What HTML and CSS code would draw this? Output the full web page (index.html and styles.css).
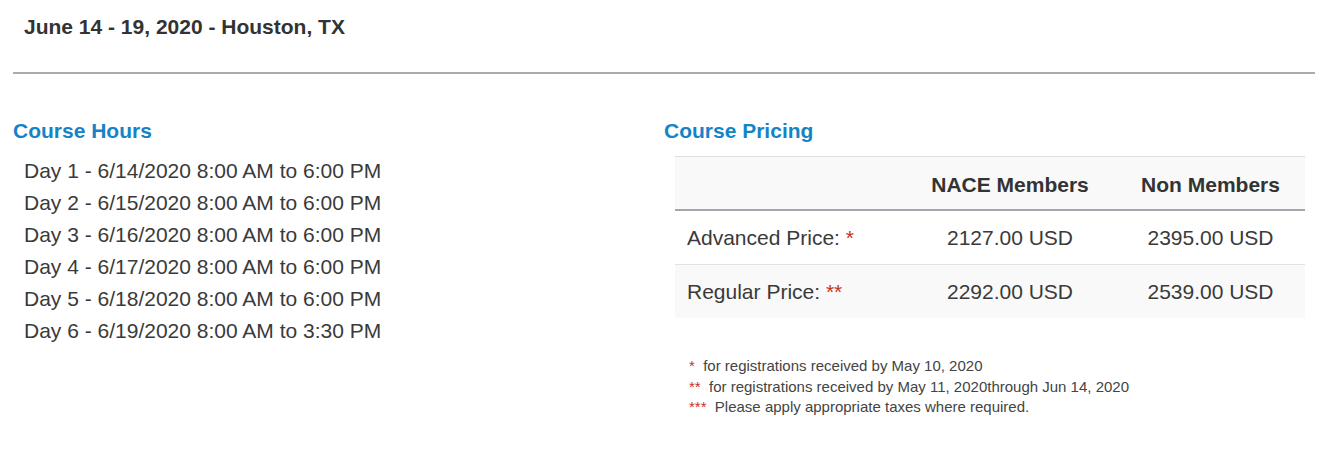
FILE: index.html
```html
<!DOCTYPE html>
<html lang="en">
<head>
<meta charset="utf-8">
<title>Course Details</title>
<link rel="stylesheet" href="styles.css">
</head>
<body>
<div class="page">
  <h1 class="title">June 14 - 19, 2020 - Houston, TX</h1>
  <div class="rule"></div>
  <div class="columns">
    <section class="col">
      <h2 class="section-title">Course Hours</h2>
      <ul class="hours">
        <li>Day 1 - 6/14/2020 8:00 AM to 6:00 PM</li>
        <li>Day 2 - 6/15/2020 8:00 AM to 6:00 PM</li>
        <li>Day 3 - 6/16/2020 8:00 AM to 6:00 PM</li>
        <li>Day 4 - 6/17/2020 8:00 AM to 6:00 PM</li>
        <li>Day 5 - 6/18/2020 8:00 AM to 6:00 PM</li>
        <li>Day 6 - 6/19/2020 8:00 AM to 3:30 PM</li>
      </ul>
    </section>
    <section class="col">
      <h2 class="section-title">Course Pricing</h2>
      <table class="pricing">
        <colgroup>
          <col class="c-label">
          <col class="c-nace">
          <col class="c-non">
        </colgroup>
        <thead>
          <tr>
            <th></th>
            <th>NACE Members</th>
            <th>Non Members</th>
          </tr>
        </thead>
        <tbody>
          <tr>
            <td class="label">Advanced Price: <span class="star">*</span></td>
            <td>2127.00 USD</td>
            <td>2395.00 USD</td>
          </tr>
          <tr class="alt">
            <td class="label">Regular Price: <span class="star">**</span></td>
            <td>2292.00 USD</td>
            <td>2539.00 USD</td>
          </tr>
        </tbody>
      </table>
      <div class="notes">
        <p><span class="star">*</span>&nbsp; for registrations received by May 10, 2020</p>
        <p><span class="star">**</span>&nbsp; for registrations received by May 11, 2020through Jun 14, 2020</p>
        <p><span class="star">***</span>&nbsp; Please apply appropriate taxes where required.</p>
      </div>
    </section>
  </div>
</div>
</body>
</html>
```

FILE: styles.css
```css
html, body {
  margin: 0;
  padding: 0;
  background: #fff;
}

body {
  font-family: "Liberation Sans", Arial, Helvetica, sans-serif;
  color: #333;
}

.page {
  padding: 15px 14px 0 13px;
}

.title {
  margin: 0 0 0 11px;
  font-size: 21px;
  line-height: 24px;
  font-weight: bold;
  color: #333;
}

.rule {
  margin-top: 33px;
  height: 2px;
  background: #ababab;
}

.columns {
  display: grid;
  grid-template-columns: 651px 651px;
  margin-top: 45px;
}

.section-title {
  margin: 0;
  font-size: 21px;
  line-height: 24px;
  font-weight: bold;
  color: #1683c6;
}

.hours {
  list-style: none;
  margin: 12px 0 0 0;
  padding: 0 0 0 11px;
  font-size: 21px;
  line-height: 32px;
  color: #3a3a3a;
}

.pricing {
  margin: 13px 0 0 11px;
  width: 630px;
  border-collapse: collapse;
  table-layout: fixed;
  font-size: 21px;
  color: #3a3a3a;
}

.c-label { width: 229px; }
.c-nace { width: 212px; }
.c-non { width: 189px; }

.pricing thead tr {
  background: #f9f9f9;
}

.pricing th {
  height: 49px;
  padding: 3px 0 0 0;
  border-top: 1px solid #dddddd;
  border-bottom: 2px solid #a3a7ad;
  font-weight: bold;
  text-align: center;
  vertical-align: middle;
  color: #333;
}

.pricing td {
  height: 53px;
  padding: 0;
  text-align: center;
  vertical-align: middle;
  border-top: 1px solid #e2e2e2;
}

.pricing tbody tr:first-child td {
  border-top: none;
}

.pricing td.label {
  text-align: left;
  padding-left: 12px;
}

.pricing tr.alt {
  background: #f9f9f9;
}

.star {
  color: #c9302c;
}

.notes {
  margin: 38px 0 0 25px;
  font-size: 15px;
  line-height: 20.5px;
  color: #444;
}

.notes p {
  margin: 0;
}
```
